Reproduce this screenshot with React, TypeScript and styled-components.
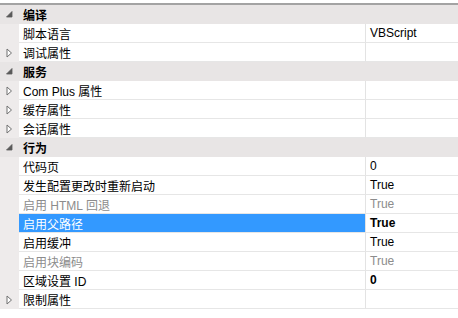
import React from "react";
import styled, { createGlobalStyle } from "styled-components";

const GlobalStyle = createGlobalStyle`
  html, body {
    margin: 0;
    padding: 0;
    background: #fff;
  }
  body {
    font-family: "Liberation Sans", "Noto Sans CJK SC", sans-serif;
    font-size: 12px;
    color: #000;
  }
`;

const Grid = styled.div`
  width: 458px;
  height: 318px;
  padding-top: 3px;
  box-sizing: border-box;
  background: #fff;
  overflow: hidden;
`;

const List = styled.div`
  border-top: 2px solid #a3a3a3;
  display: flex;
  flex-direction: column;
`;

const CategoryRow = styled.div`
  display: flex;
  align-items: center;
  height: 19px;
  background: #e8e5e5;
  font-weight: bold;
`;

const Row = styled.div`
  display: flex;
  height: 19px;
`;

const Gutter = styled.div`
  width: 19px;
  flex-shrink: 0;
  display: flex;
  align-items: center;
  justify-content: center;
  background: #eeeBeB;
`;

const CategoryGutter = styled(Gutter)`
  background: transparent;
`;

const NameCell = styled.div<{ $selected?: boolean; $disabled?: boolean }>`
  width: 347px;
  flex-shrink: 0;
  box-sizing: border-box;
  padding-left: 4px;
  display: flex;
  align-items: center;
  border-right: 1px solid #e3e3e3;
  border-bottom: 1px solid #e6e6e6;
  background: ${({ $selected }) => ($selected ? "#3399ff" : "#fff")};
  color: ${({ $selected, $disabled }) =>
    $selected ? "#fff" : $disabled ? "#8c8c8c" : "#000"};
  white-space: nowrap;
`;

const ValueCell = styled.div<{ $bold?: boolean; $disabled?: boolean }>`
  flex: 1;
  box-sizing: border-box;
  padding-left: 4px;
  display: flex;
  align-items: center;
  border-bottom: 1px solid #e6e6e6;
  font-weight: ${({ $bold }) => ($bold ? "bold" : "normal")};
  color: ${({ $disabled }) => ($disabled ? "#8c8c8c" : "#000")};
  white-space: nowrap;
`;

const CategoryLabel = styled.span`
  padding-left: 4px;
`;

const Expanded = () => (
  <svg width="7" height="7" viewBox="0 0 7 7">
    <path d="M6 0.5 L6 6 L0.5 6 Z" fill="#5a5a5a" stroke="#5a5a5a" strokeWidth="0.8" />
  </svg>
);

const Collapsed = () => (
  <svg width="7" height="10" viewBox="0 0 7 10">
    <path d="M1 1 L5.5 5 L1 9 Z" fill="#fff" stroke="#707070" strokeWidth="1" />
  </svg>
);

type Prop = {
  name: string;
  value?: string;
  sub?: boolean;
  disabled?: boolean;
  bold?: boolean;
  selected?: boolean;
};

type Category = { title: string; props: Prop[] };

const data: Category[] = [
  {
    title: "编译",
    props: [
      { name: "脚本语言", value: "VBScript" },
      { name: "调试属性", sub: true },
    ],
  },
  {
    title: "服务",
    props: [
      { name: "Com Plus 属性", sub: true },
      { name: "缓存属性", sub: true },
      { name: "会话属性", sub: true },
    ],
  },
  {
    title: "行为",
    props: [
      { name: "代码页", value: "0" },
      { name: "发生配置更改时重新启动", value: "True" },
      { name: "启用 HTML 回退", value: "True", disabled: true },
      { name: "启用父路径", value: "True", bold: true, selected: true },
      { name: "启用缓冲", value: "True" },
      { name: "启用块编码", value: "True", disabled: true },
      { name: "区域设置 ID", value: "0", bold: true },
      { name: "限制属性", sub: true },
    ],
  },
];

const App = () => (
  <>
    <GlobalStyle />
    <Grid>
      <List>
        {data.map((cat) => (
          <React.Fragment key={cat.title}>
            <CategoryRow>
              <CategoryGutter>
                <Expanded />
              </CategoryGutter>
              <CategoryLabel>{cat.title}</CategoryLabel>
            </CategoryRow>
            {cat.props.map((p) => (
              <Row key={p.name}>
                <Gutter>{p.sub && <Collapsed />}</Gutter>
                <NameCell $selected={p.selected} $disabled={p.disabled}>
                  {p.name}
                </NameCell>
                <ValueCell $bold={p.bold} $disabled={p.disabled}>
                  {p.value}
                </ValueCell>
              </Row>
            ))}
          </React.Fragment>
        ))}
      </List>
    </Grid>
  </>
);

export default App;
